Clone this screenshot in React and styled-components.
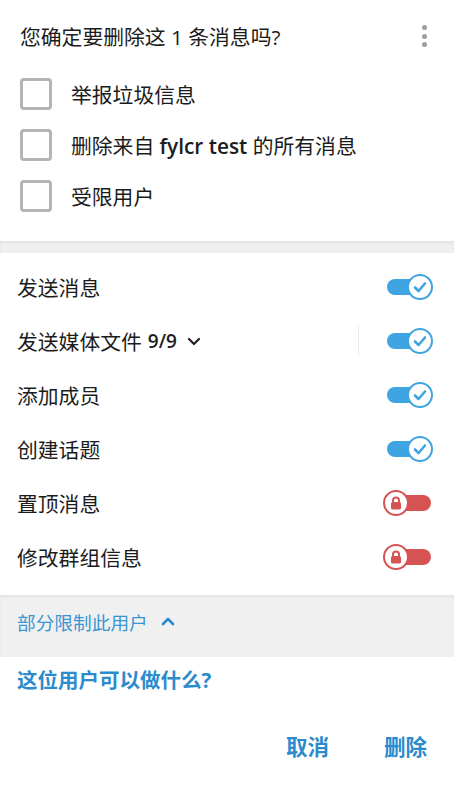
import React from "react";
import styled, { createGlobalStyle } from "styled-components";

const Global = createGlobalStyle`
  html, body { margin: 0; padding: 0; background: #fff; }
  body { font-family: "Open Sans", "Noto Sans CJK SC", sans-serif; color: #1c1c1c; }
  * { box-sizing: border-box; }
`;

const Page = styled.div`
  width: 454px;
  min-height: 787px;
  background: #fff;
  display: flex;
  flex-direction: column;
`;

const Top = styled.div`
  padding: 14px 0 20px 20px;
`;

const Header = styled.div`
  display: flex;
  align-items: center;
  justify-content: space-between;
  height: 44px;
  padding-right: 27px;
  font-size: 20.8px;
  margin-bottom: 10px;
`;

const Kebab = styled.div`
  display: flex;
  flex-direction: column;
  gap: 3.7px;
  span {
    width: 5px;
    height: 5px;
    border-radius: 50%;
    background: #9e9e9e;
  }
`;

const CheckRow = styled.label`
  display: flex;
  align-items: center;
  height: 51px;
  font-size: 20.8px;
  gap: 19px;
  b { font-weight: 600; }
`;

const Box = styled.span`
  width: 32px;
  height: 32px;
  border: 3px solid #b4b4b4;
  border-radius: 4px;
  flex: none;
`;

const Gap = styled.div`
  height: ${(p) => p.$h}px;
  background: #f0f0f0;
  box-shadow: inset 0 2px 3px rgba(0, 0, 0, 0.06);
`;

const List = styled.div`
  padding: 7px 0 11px;
`;

const PermRow = styled.div`
  display: flex;
  align-items: center;
  height: 54px;
  padding: 0 23px 0 17px;
  font-size: 20.8px;
`;

const PermLabel = styled.div`
  flex: 1;
  display: flex;
  align-items: center;
`;

const Count = styled.span`
  font-weight: 600;
  font-size: 19px;
  margin: 0 10px 0 6px;
`;

const Divider = styled.span`
  width: 1px;
  height: 30px;
  background: #ececec;
  margin-right: 28px;
`;

const Toggle = styled.div`
  position: relative;
  width: 44px;
  height: 26px;
  flex: none;
  display: flex;
  align-items: center;
`;

const Track = styled.div`
  width: 100%;
  height: 16px;
  border-radius: 8px;
  background: ${(p) => p.$c};
`;

const Knob = styled.div`
  position: absolute;
  top: 0;
  ${(p) => (p.$on ? "right: -2px;" : "left: -4px;")}
  width: 26px;
  height: 26px;
  border-radius: 50%;
  background: #fff;
  border: 2.5px solid ${(p) => p.$c};
  display: flex;
  align-items: center;
  justify-content: center;
`;

const Restrict = styled.div`
  height: 62px;
  background: #f0f0f0;
  box-shadow: inset 0 2px 3px rgba(0, 0, 0, 0.05);
  display: flex;
  align-items: center;
  gap: 13px;
  padding: 0 0 10px 17px;
  color: #3a96d2;
  font-size: 18.7px;
`;

const Question = styled.div`
  padding: 0 17px;
  height: 44px;
  display: flex;
  align-items: center;
  color: #2b8bcc;
  font-weight: 700;
  font-size: 20.5px;
`;

const Actions = styled.div`
  display: flex;
  justify-content: flex-end;
  gap: 55px;
  padding: 29px 27px 0 0;
`;

const Btn = styled.button`
  border: none;
  background: none;
  padding: 0;
  font-family: inherit;
  color: #2b8bcc;
  font-weight: 700;
  font-size: 21.5px;
`;

const BLUE = "#3fa4e2";
const RED = "#d65353";

function Switch({ on }) {
  const c = on ? BLUE : RED;
  return (
    <Toggle>
      <Track $c={c} />
      <Knob $on={on} $c={c}>
        {on ? (
          <svg width="14" height="12" viewBox="0 0 14 12">
            <path d="M2 6.5 L5.5 10 L12 2.5" fill="none" stroke={c} strokeWidth="2.6" strokeLinecap="round" strokeLinejoin="round" />
          </svg>
        ) : (
          <svg width="12" height="14" viewBox="0 0 12 14">
            <path d="M3 6.5 V4.5 a3 3 0 0 1 6 0 V6.5" fill="none" stroke={c} strokeWidth="2" />
            <rect x="1" y="6" width="10" height="7.5" rx="1.5" fill={c} />
          </svg>
        )}
      </Knob>
    </Toggle>
  );
}

const perms = [
  { label: "发送消息", on: true },
  { label: "发送媒体文件", on: true, count: "9/9" },
  { label: "添加成员", on: true },
  { label: "创建话题", on: true },
  { label: "置顶消息", on: false },
  { label: "修改群组信息", on: false },
];

export default function App() {
  return (
    <Page>
      <Global />
      <Top>
        <Header>
          <span>您确定要删除这 1 条消息吗?</span>
          <Kebab>
            <span />
            <span />
            <span />
          </Kebab>
        </Header>
        <CheckRow>
          <Box />
          举报垃圾信息
        </CheckRow>
        <CheckRow>
          <Box />
          <span>
            删除来自 <b>fylcr test</b> 的所有消息
          </span>
        </CheckRow>
        <CheckRow>
          <Box />
          受限用户
        </CheckRow>
      </Top>
      <Gap $h={12} />
      <List>
        {perms.map((p) => (
          <PermRow key={p.label}>
            <PermLabel>
              {p.label}
              {p.count && (
                <>
                  <Count>{p.count}</Count>
                  <svg width="14" height="9" viewBox="0 0 14 9">
                    <path d="M2 2 L7 7 L12 2" fill="none" stroke="#222" strokeWidth="2.2" strokeLinecap="round" strokeLinejoin="round" />
                  </svg>
                </>
              )}
            </PermLabel>
            {p.count && <Divider />}
            <Switch on={p.on} />
          </PermRow>
        ))}
      </List>
      <Restrict>
        部分限制此用户
        <svg width="14" height="9" viewBox="0 0 14 9">
          <path d="M2 7 L7 2 L12 7" fill="none" stroke="#2b8bcc" strokeWidth="2.6" strokeLinecap="round" strokeLinejoin="round" />
        </svg>
      </Restrict>
      <Question>这位用户可以做什么?</Question>
      <Actions>
        <Btn>取消</Btn>
        <Btn>删除</Btn>
      </Actions>
    </Page>
  );
}
